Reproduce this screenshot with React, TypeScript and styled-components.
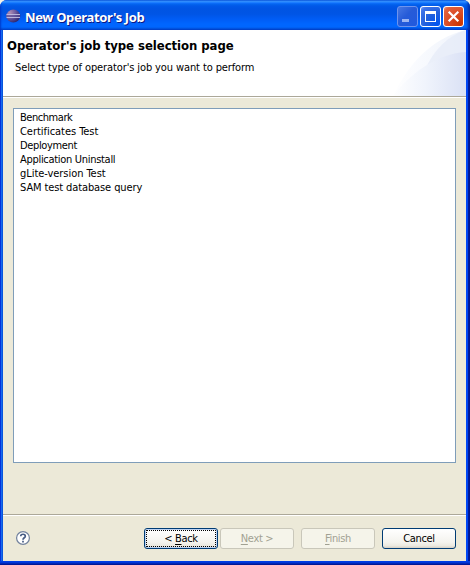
import React from 'react';
import styled, { createGlobalStyle, css } from 'styled-components';

const GlobalStyle = createGlobalStyle`
  * { box-sizing: border-box; }
  body { margin: 0; background: #f4f2e8; overflow: hidden; }
  button { font: inherit; }
`;

const Window = styled.main`
  width: 470px;
  height: 565px;
  display: flex;
  flex-direction: column;
  border-radius: 7px 7px 0 0;
  overflow: hidden;
  background: #0048f1;
  color: #000;
  font-family: 'DejaVu Sans Condensed', 'DejaVu Sans', sans-serif;
  font-stretch: condensed;
  font-size: 11px;
  line-height: 14px;
`;

const TitleBar = styled.header`
  height: 30px;
  flex: none;
  display: flex;
  align-items: flex-start;
  padding: 6px 6px 0 6px;
  background: linear-gradient(
    #0058e6 0, #3a93ff 1px, #288eff 2px, #1270ff 3px, #0366ef 4px,
    #0058e8 6px, #0054e3 9px, #0055e5 14px, #005cf5 19px,
    #0066ff 24px, #0066fe 27px, #005bea 28px, #0042cc 30px
  );
  box-shadow: inset -3px 0 3px -1px #0028a0, inset 2px 0 2px -1px #0038c8;
`;

const TitleIcon = styled.svg`
  width: 16px;
  height: 16px;
  margin-top: 2px;
  flex: none;
`;

const Title = styled.h1<{ $track: number }>`
  flex: 1;
  margin: 3px 0 0 3px;
  color: #fff;
  font-family: 'Noto Sans', sans-serif;
  font-size: 13px;
  font-weight: 700;
  line-height: 16px;
  letter-spacing: ${p => p.$track}px;
  text-shadow: 1px 1px 0 #0a1883;
  white-space: nowrap;
`;

const WindowButtons = styled.div`
  display: flex;
  gap: 2px;
`;

const WindowButton = styled.button<{ $kind: 'minimize' | 'maximize' | 'close' }>`
  width: 21px;
  height: 21px;
  padding: 0;
  border: 1px solid #fff;
  border-radius: 3px;
  background: radial-gradient(circle at 85% 90%, #0055f0 0%, #2360dc 50%, #3f74e8 85%, #789ff5 100%);
  ${p => p.$kind === 'minimize' && css`
    border-color: #6f94ed;
    background: linear-gradient(135deg, #4778e3, #265bd8 45%, #2059de);
  `}
  ${p => p.$kind === 'close' && css`
    background: radial-gradient(circle at 85% 90%, #cc3600 0%, #da4c25 50%, #e2613e 85%, #f0a088 100%);
  `}
  svg { display: block; width: 19px; height: 19px; }
`;

const Frame = styled.div`
  flex: 1;
  display: flex;
  padding: 0 4px 4px 3px;
  background:
    linear-gradient(#003de5 0, #003de5 1px, #0030cc 2px, #001da0 3px, #00138c 4px) bottom / 100% 4px no-repeat,
    linear-gradient(90deg, #0030d9 0, #0831d9 1px, #166aee 1px, #166aee 2px, #0855dd 2px) left / 3px 100% no-repeat,
    linear-gradient(90deg, #0046f4 0, #0046f4 2px, #001da0 2px, #00138c 4px) right / 4px 100% no-repeat;
`;

const Client = styled.div`
  flex: 1;
  display: flex;
  flex-direction: column;
  background: #ece9d8;
`;

const Banner = styled.section`
  height: 68px;
  flex: none;
  display: flex;
  justify-content: space-between;
  border-bottom: 1px solid #fff;
  background: linear-gradient(#aca899, #aca899) bottom / 100% 1px no-repeat, #fff;
`;

const BannerText = styled.div`
  padding: 8px 0 0 4px;
  white-space: nowrap;
`;

const Heading = styled.h2<{ $track: number }>`
  margin: 0;
  font-family: 'DejaVu Sans', sans-serif;
  font-stretch: condensed;
  font-size: 13px;
  line-height: 16px;
  font-weight: 700;
  letter-spacing: ${p => p.$track}px;
`;

const Description = styled.p<{ $track: number }>`
  margin: 7px 0 0 8px;
  letter-spacing: ${p => p.$track}px;
`;

const BannerArt = styled.svg`
  width: 75px;
  height: 66px;
  flex: none;
`;

const List = styled.ul`
  height: 355px;
  margin: 10px 10px 0;
  padding: 2px 0 0 6px;
  border: 1px solid #7f9db9;
  background: #fff;
  list-style: none;
`;

const ListItem = styled.li<{ $track: number }>`
  height: 14px;
  letter-spacing: ${p => p.$track}px;
  white-space: nowrap;
`;

const Footer = styled.footer`
  flex: 1;
  display: flex;
  align-items: flex-start;
  margin-top: 51px;
  padding: 12px 10px 0 12px;
  border-top: 1px solid #aca899;
  box-shadow: inset 0 1px 0 #fff;
`;

const HelpIcon = styled.svg`
  width: 16px;
  height: 16px;
  margin: 3px auto 0 0;
`;

const PushButton = styled.button<{ $gap?: number; $focused?: boolean }>`
  width: 74px;
  height: 21px;
  margin: 1px 0 0 ${p => p.$gap ?? 0}px;
  padding: 1px 0 0;
  border: 1px solid #003c74;
  border-radius: 3px;
  background: linear-gradient(#fff, #f4f3ee 70%, #ece9e0 88%, #d6d0c5);
  color: #000;
  letter-spacing: -0.35px;
  ${p => p.$focused && css`
    box-shadow: inset 0 0 0 1px #bed3f3;
    outline: 1px dotted #000;
    outline-offset: -3px;
  `}
  &:disabled {
    border-color: #c9c7ba;
    background: #f5f4ea;
    color: #a1a192;
  }
`;

const Mnemonic = styled.span`
  text-decoration: underline;
  text-underline-offset: 2px;
  text-decoration-thickness: 1px;
`;

const jobs = [
  { name: 'Benchmark', track: -0.45 },
  { name: 'Certificates Test', track: -0.04 },
  { name: 'Deployment', track: -0.35 },
  { name: 'Application Uninstall', track: -0.3 },
  { name: 'gLite-version Test', track: -0.05 },
  { name: 'SAM test database query', track: -0.11 },
];

export default function App() {
  return (
    <>
      <GlobalStyle />
      <Window>
        <TitleBar>
          <TitleIcon viewBox="0 0 16 16">
            <defs>
              <radialGradient id="globe" cx="25%" cy="25%" r="85%">
                <stop offset="0" stopColor="#b08fb4" />
                <stop offset=".5" stopColor="#6a5a9f" />
                <stop offset="1" stopColor="#29236c" />
              </radialGradient>
            </defs>
            <ellipse cx="7.3" cy="8" rx="7" ry="6.5" fill="url(#globe)" />
            <path d="M.5 6.5h13.5M.5 9.5h13.5" stroke="#c3bfe4" strokeWidth=".9" />
            <path d="M.5 7.5h13.5v1H.5z" fill="#5a4f96" />
          </TitleIcon>
          <Title $track={-0.36}>New Operator's Job</Title>
          <WindowButtons>
            <WindowButton $kind="minimize" aria-label="Minimize">
              <svg viewBox="0 0 19 19"><path d="M4 12h7v3H4z" fill="#9cb5f2" /></svg>
            </WindowButton>
            <WindowButton $kind="maximize" aria-label="Maximize">
              <svg viewBox="0 0 19 19"><path fillRule="evenodd" d="M4 4h11v11H4zM5 7v7h9V7z" fill="#fff" /></svg>
            </WindowButton>
            <WindowButton $kind="close" aria-label="Close">
              <svg viewBox="0 0 19 19"><path d="M4.7 4.7l9.6 9.6M14.3 4.7l-9.6 9.6" stroke="#fff" strokeWidth="2.2" /></svg>
            </WindowButton>
          </WindowButtons>
        </TitleBar>
        <Frame>
          <Client>
            <Banner>
              <BannerText>
                <Heading $track={-0.05}>Operator's job type selection page</Heading>
                <Description $track={-0.11}>Select type of operator's job you want to perform</Description>
              </BannerText>
              <BannerArt viewBox="0 0 75 66">
                <defs>
                  <linearGradient id="swoosh" gradientUnits="userSpaceOnUse" x1="0" x2="75" y1="0" y2="0">
                    <stop offset="0" stopColor="#fff" />
                    <stop offset=".4" stopColor="#f8fafe" />
                    <stop offset="1" stopColor="#eff3fb" />
                  </linearGradient>
                  <linearGradient id="hill" gradientUnits="userSpaceOnUse" x1="0" x2="75" y1="0" y2="0">
                    <stop offset="0" stopColor="#fff" />
                    <stop offset=".45" stopColor="#f0f4fc" />
                    <stop offset="1" stopColor="#dae1f5" />
                  </linearGradient>
                </defs>
                <path d="M2 66C16 36 40 8 75 0V66Z" fill="url(#swoosh)" />
                <path d="M34 40C43 19 57 6 75 0V24Z" fill="#e3eaf8" opacity=".65" />
                <path d="M2 66C18 45 44 24 75 22V66Z" fill="url(#hill)" />
              </BannerArt>
            </Banner>
            <List>
              {jobs.map(job => (
                <ListItem key={job.name} $track={job.track}>{job.name}</ListItem>
              ))}
            </List>
            <Footer>
              <HelpIcon viewBox="0 0 16 16">
                <circle cx="8" cy="8" r="6.4" fill="#fff" stroke="#72829d" strokeWidth="1.2" />
                <path d="M5.7 6.2C5.7 3.6 10.3 3.6 10.3 6.2C10.3 7.8 8 7.8 8 9.7M8 10.8v1.7" fill="none" stroke="#465b83" strokeWidth="1.7" />
              </HelpIcon>
              <PushButton $focused>&lt; <Mnemonic>B</Mnemonic>ack</PushButton>
              <PushButton $gap={2} disabled><Mnemonic>N</Mnemonic>ext &gt;</PushButton>
              <PushButton $gap={7} disabled><Mnemonic>F</Mnemonic>inish</PushButton>
              <PushButton $gap={7}>Cancel</PushButton>
            </Footer>
          </Client>
        </Frame>
      </Window>
    </>
  );
}
